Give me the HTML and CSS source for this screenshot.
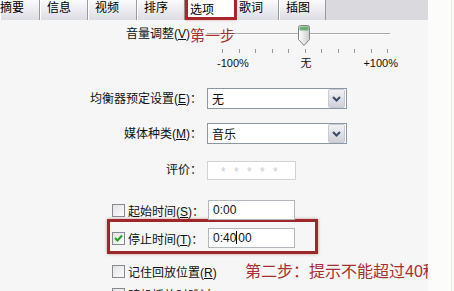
FILE: index.html
```html
<!DOCTYPE html>
<html lang="zh-CN">
<head>
    <meta charset="UTF-8">
    <meta name="viewport" content="width=device-width, initial-scale=1.0">
    <title>选项</title>
    <link rel="stylesheet" href="styles.css">
</head>
<body>
    <div class="screen">
        <div class="panel">
            <div class="tabs">
                <span class="tab first">摘要</span>
                <span class="tab">信息</span>
                <span class="tab">视频</span>
                <span class="tab">排序</span>
                <span class="tab active">选项</span>
                <span class="tab after-active">歌词</span>
                <span class="tab">插图</span>
                <span class="tab-fill"></span>
            </div>

            <div class="options">
                <div class="volume">
                    <span class="label volume-label">音量调整(<u>V</u>)</span>
                    <div class="slider">
                        <div class="track"></div>
                        <svg class="thumb" width="12" height="21" viewBox="0 0 12 21">
                            <defs>
                                <linearGradient id="thumbBody" x1="0" y1="0" x2="1" y2="0">
                                    <stop offset="0" stop-color="#ffffff"/>
                                    <stop offset="1" stop-color="#c9cbcd"/>
                                </linearGradient>
                            </defs>
                            <path d="M0.5 2.5 Q0.5 0.5 2.5 0.5 H9.5 Q11.5 0.5 11.5 2.5 V14.5 L6 20.5 L0.5 14.5 Z" fill="url(#thumbBody)" stroke="#7d8389"/>
                            <rect x="1.5" y="1.5" width="9" height="4" rx="1" fill="#6fae72"/>
                        </svg>
                        <div class="ticks">
                            <i></i><i></i><i></i><i></i><i></i><i></i><i></i><i></i><i></i><i></i><i></i>
                        </div>
                        <div class="scale">
                            <span>-100%</span>
                            <span>无</span>
                            <span>+100%</span>
                        </div>
                    </div>
                    <span class="note note-one">第一步</span>
                </div>

                <div class="row row-eq">
                    <span class="label">均衡器预定设置(<u>E</u>)：</span>
                    <div class="select wide">
                        <span>无</span>
                        <span class="drop"><svg width="9" height="6" viewBox="0 0 9 6"><path d="M1 1 L4.5 4.5 L8 1" fill="none" stroke="#3c4a66" stroke-width="2"/></svg></span>
                    </div>
                </div>

                <div class="row row-media">
                    <span class="label">媒体种类(<u>M</u>)：</span>
                    <div class="select wide">
                        <span>音乐</span>
                        <span class="drop"><svg width="9" height="6" viewBox="0 0 9 6"><path d="M1 1 L4.5 4.5 L8 1" fill="none" stroke="#3c4a66" stroke-width="2"/></svg></span>
                    </div>
                </div>

                <div class="row row-rating">
                    <span class="label">评价：</span>
                    <div class="rating">
                        <i>*</i><i>*</i><i>*</i><i>*</i><i>*</i>
                    </div>
                </div>

                <div class="check-row row-start">
                    <span class="box"></span>
                    <span class="check-label">起始时间(<u>S</u>)：</span>
                    <div class="field">0:00</div>
                </div>

                <div class="marked">
                    <div class="check-row">
                        <span class="box checked"><svg width="9" height="8" viewBox="0 0 9 8"><path d="M1 4 L3.5 6.5 L8 1.5" fill="none" stroke="#21a121" stroke-width="2"/></svg></span>
                        <span class="check-label">停止时间(<u>T</u>)：</span>
                        <div class="field">0:40<span class="caret"></span>00</div>
                    </div>
                </div>

                <div class="check-row row-remember">
                    <span class="box"></span>
                    <span class="check-label remember">记住回放位置(<u>R</u>)</span>
                    <span class="note note-two">第二步：提示不能超过40秒</span>
                </div>

                <div class="check-row row-shuffle">
                    <span class="box"></span>
                    <span class="check-label">随机播放时跳过(<u>K</u>)</span>
                </div>
            </div>
        </div>
        <div class="margin"></div>
    </div>
</body>
</html>
```

FILE: styles.css
```css
body {
    margin: 0;
    font: 12px "Liberation Sans", "Noto Sans CJK SC", sans-serif;
    color: #111;
    background: #fcfdfb;
}

.screen {
    display: flex;
    height: 291px;
    overflow: hidden;
}

.panel {
    width: 428px;
    flex: none;
    background: #f6f6f6;
    overflow: hidden;
}

.margin {
    width: 23px;
    border-right: 1px solid #e3ebdd;
}

u {
    text-decoration: underline;
}

/* tab strip */

.tabs {
    display: grid;
    grid-template-columns: 40px 48px 49px 48px 52px 42px 47px 1fr;
    height: 16px;
    border-bottom: 1px solid #9c9ca4;
    background: #dadade;
}

.tab {
    padding-left: 7px;
    line-height: 16px;
    border-right: 1px solid #9a9aa2;
    box-shadow: inset 1px 0 0 #ffffff;
    background: linear-gradient(#fbfbfd, #dcdce4);
    color: #000;
}

.tab.first {
    padding-left: 0;
}

.tab.active {
    position: relative;
    padding-left: 2px;
    margin-top: -3px;
    height: 17px;
    line-height: 20px;
    border: 3px solid #a8262c;
    background: #fff;
    box-shadow: 0 0 2px rgba(190, 60, 60, 0.5);
}

.tab.after-active {
    padding-left: 2px;
}

.tab-fill {
    background: #dadade;
}

/* options */

.options {
    position: relative;
    padding-top: 6px;
}

.label {
    width: 202px;
    flex: none;
    text-align: right;
    line-height: 20px;
}

.volume {
    display: flex;
    gap: 5px;
}

.volume-label {
    padding: 1px 12px 0 0;
    width: 190px;
}

.slider {
    position: relative;
    width: 191px;
}

.track {
    width: 183px;
    height: 1px;
    margin-top: 10px;
    background: #a9a9a9;
    border-bottom: 1px solid #fff;
}

.thumb {
    position: absolute;
    left: 91px;
    top: 2px;
}

.ticks {
    display: flex;
    justify-content: space-between;
    margin: 14px 10px 0 15px;
    height: 4px;
}

.ticks i {
    width: 1px;
    background: #9a9a9a;
}

.scale {
    display: flex;
    justify-content: space-between;
    margin: 4px 0 0 10px;
    font-size: 11px;
    line-height: 12px;
}

.note {
    color: #a8302f;
    white-space: nowrap;
}

.note-one {
    position: absolute;
    left: 190px;
    top: 10px;
    font-size: 15px;
    line-height: 17px;
}

.row {
    display: flex;
    align-items: center;
    gap: 5px;
}

.row-eq {
    margin-top: 19px;
}

.row-media {
    margin-top: 14px;
}

.row-rating {
    margin-top: 16px;
}

.select {
    display: flex;
    align-items: center;
    justify-content: space-between;
    box-sizing: border-box;
    height: 21px;
    padding: 0 1px 0 4px;
    border: 1px solid #8d97a3;
    background: #fff;
}

.select.wide {
    width: 140px;
}

.drop {
    display: flex;
    align-items: center;
    justify-content: center;
    width: 15px;
    height: 17px;
    border: 1px solid #c6cad2;
    border-radius: 2px;
    background: linear-gradient(#f2f2f4, #cfd1d8);
}

.rating {
    display: flex;
    gap: 5px;
    box-sizing: border-box;
    width: 89px;
    height: 19px;
    padding: 3px 0 0 13px;
    border: 1px solid #cfd2d6;
    background: #fff;
}

.rating i {
    font-style: normal;
    width: 8px;
    color: #c8cbcf;
    line-height: 14px;
}

/* checkbox rows */

.check-row {
    display: flex;
    align-items: center;
    padding-left: 112px;
    height: 20px;
}

.box {
    display: flex;
    align-items: center;
    justify-content: center;
    box-sizing: border-box;
    width: 13px;
    height: 13px;
    flex: none;
    border: 1px solid #858a90;
    background: linear-gradient(135deg, #e4e4e4, #fbfbfb);
}

.check-label {
    flex: none;
    padding-left: 3px;
    width: 80px;
    white-space: nowrap;
}

.field {
    flex: none;
    box-sizing: border-box;
    width: 87px;
    height: 20px;
    padding-left: 4px;
    line-height: 19px;
    border: 1px solid #b2b7bd;
    background: #fff;
}

.caret {
    display: inline-block;
    width: 1px;
    height: 13px;
    margin: 0 1px -2px 0;
    background: #000;
}

.row-start {
    margin-top: 20px;
}

.marked {
    box-sizing: border-box;
    width: 211px;
    height: 35px;
    margin: -1px 0 0 107px;
    padding-top: 6px;
    border: 3px solid #9e272c;
    box-shadow: 0 0 3px rgba(190, 70, 70, 0.55);
}

.marked .check-row {
    padding-left: 2px;
}

.row-remember {
    margin-top: 9px;
    height: 17px;
}

.check-label.remember {
    width: 117px;
}

.note-two {
    flex: none;
    font-size: 16px;
    line-height: 17px;
}

.row-shuffle {
    margin-top: 6px;
    height: 17px;
}
```
